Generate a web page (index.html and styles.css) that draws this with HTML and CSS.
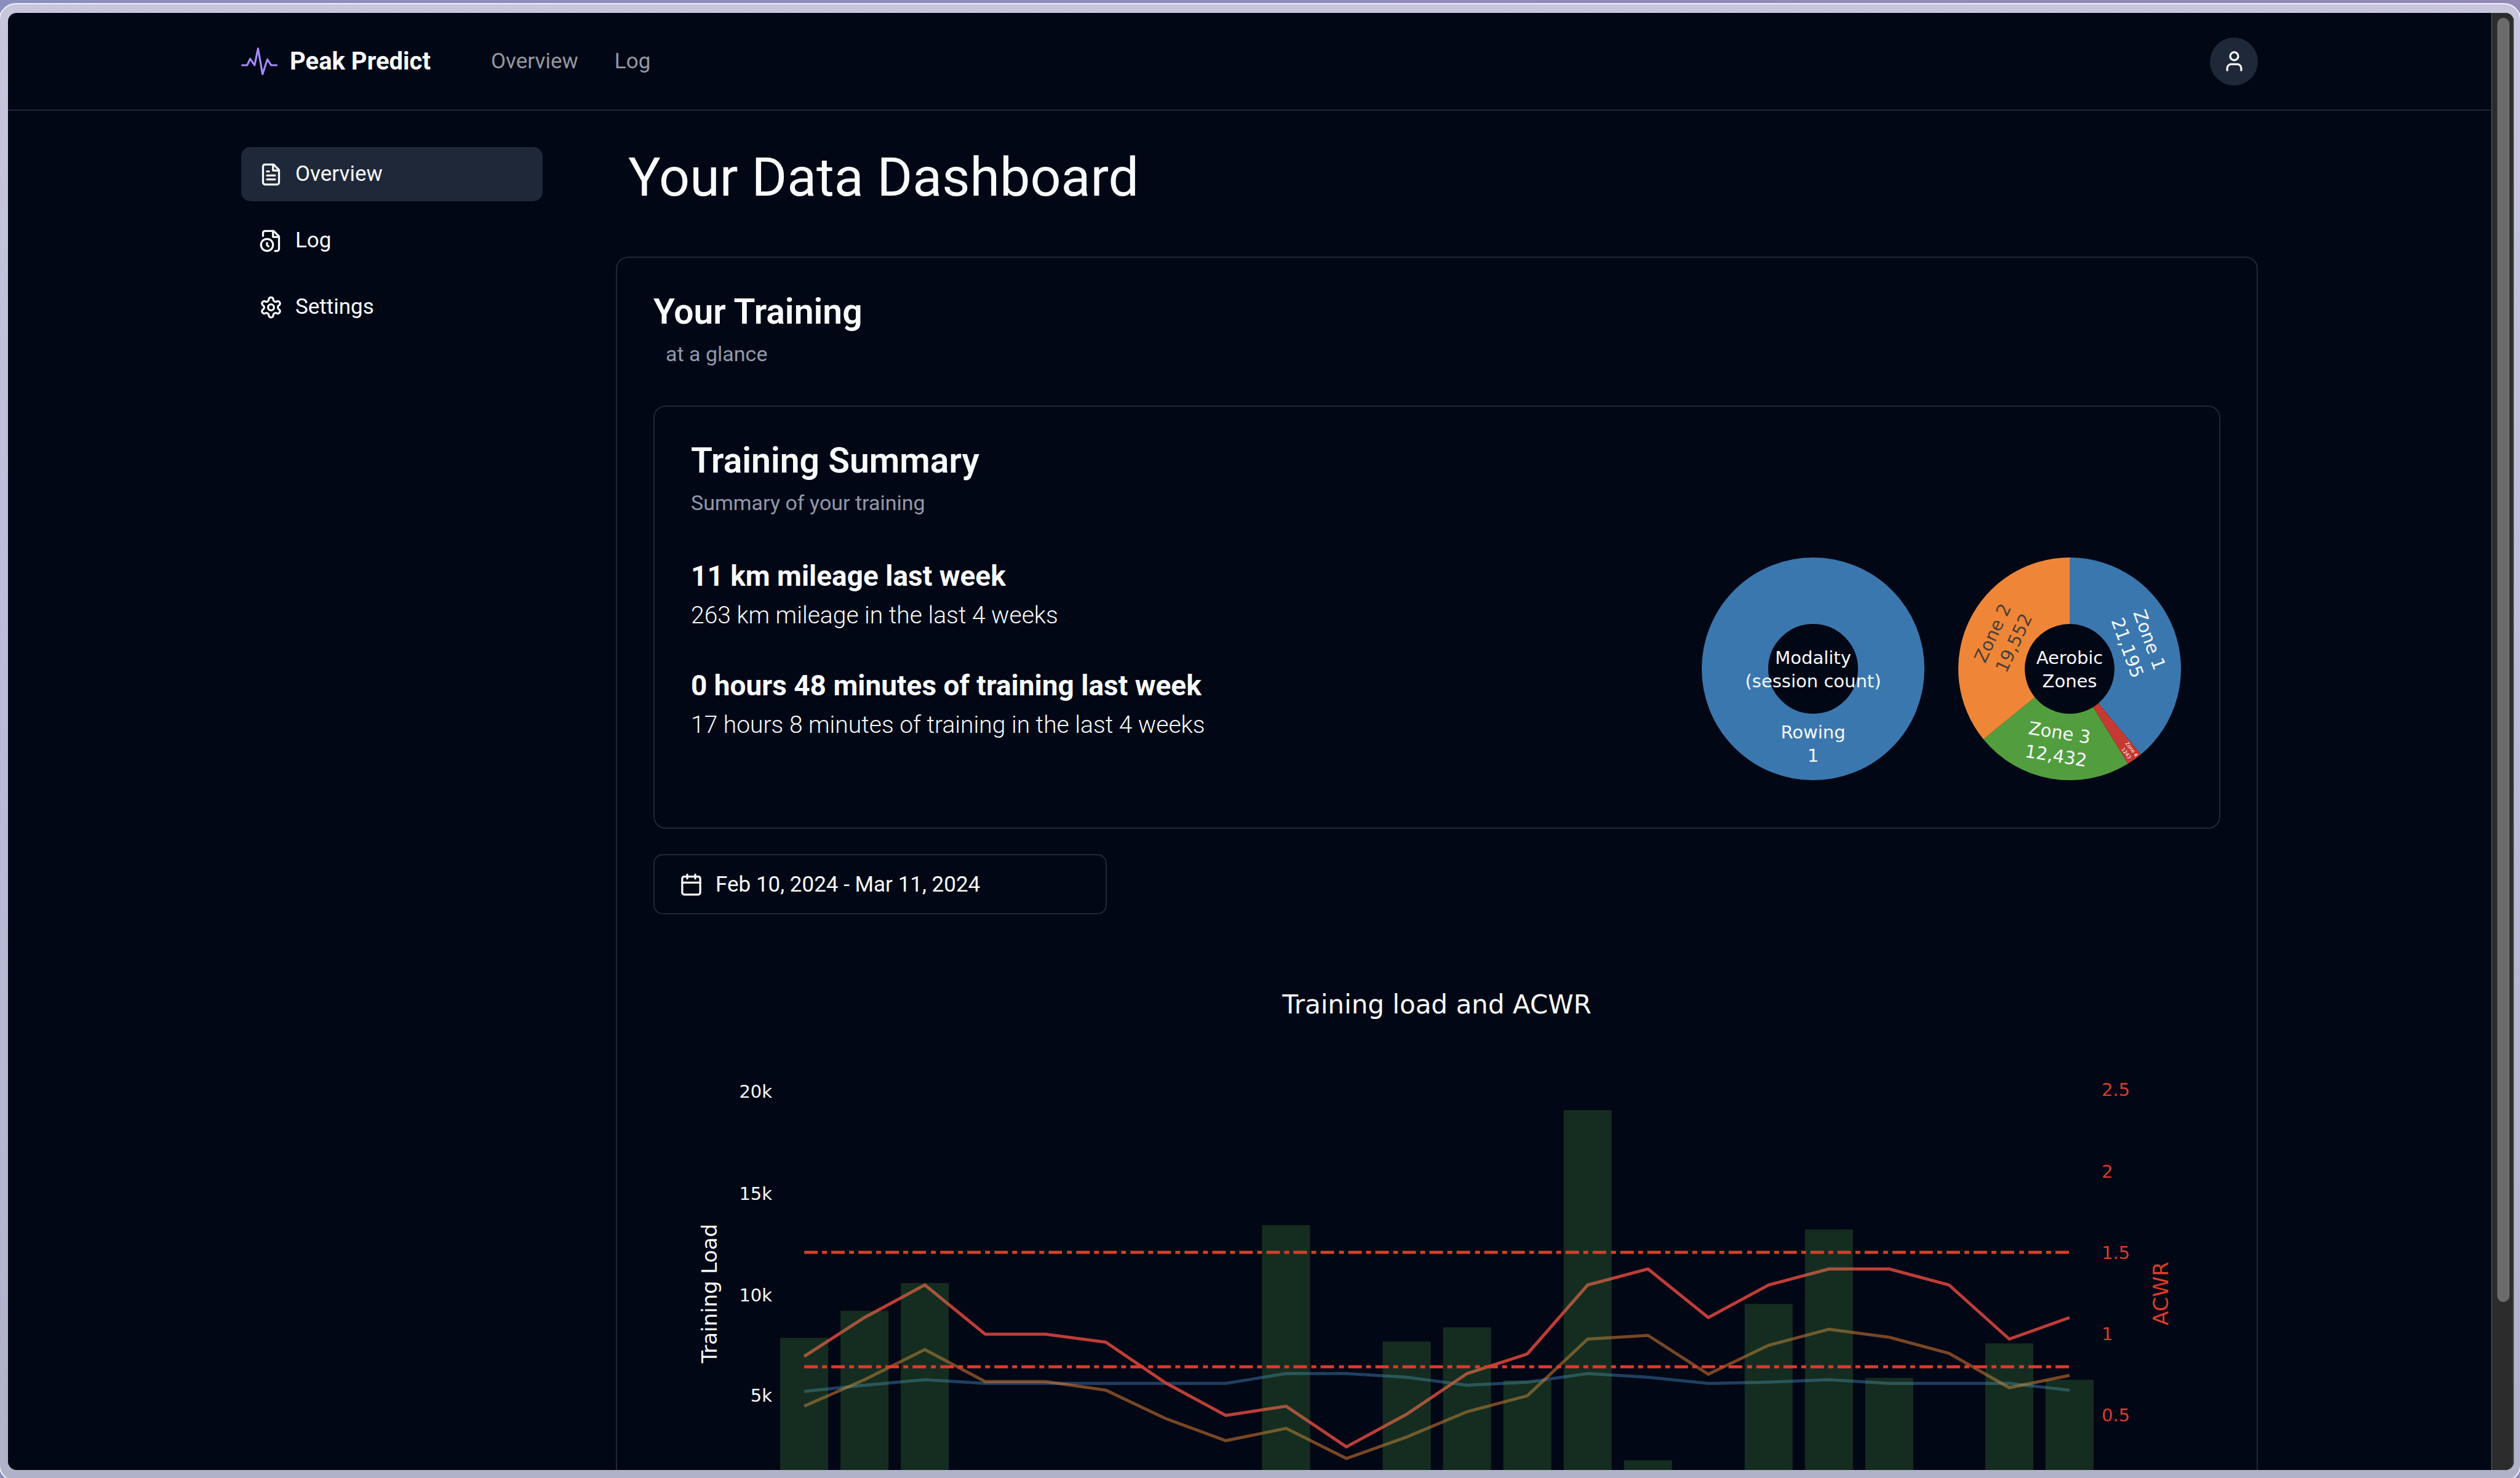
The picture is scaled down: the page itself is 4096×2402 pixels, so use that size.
FILE: index.html
```html
<!DOCTYPE html>
<html lang="en">
<head>
<meta charset="utf-8">
<title>Peak Predict</title>
<link rel="stylesheet" href="styles.css">
</head>
<body>
<div class="frame">
<div class="window">
  <div class="page">
    <header class="site-header">
      <div class="container header-row">
        <a class="brand" href="#">
          <svg class="brand-icon" viewBox="48 43 187 187" aria-hidden="true"><polyline points="53,157 79,157 94,124 117,157 135,71 158,203 183,127 202,157 231,157"/></svg>
          <span>Peak Predict</span>
        </a>
        <nav class="top-nav">
          <a href="#">Overview</a>
          <a href="#">Log</a>
        </nav>
        <button class="avatar" type="button" aria-label="Account">
          <svg class="icon" viewBox="0 0 24 24"><path d="M19 21v-2a4 4 0 0 0-4-4H9a4 4 0 0 0-4 4v2"/><circle cx="12" cy="7" r="4"/></svg>
        </button>
      </div>
    </header>

    <div class="container layout">
      <nav class="sidebar">
        <a class="side-link active" href="#">
          <svg class="icon" viewBox="0 0 24 24"><path d="M14.5 2H6a2 2 0 0 0-2 2v16a2 2 0 0 0 2 2h12a2 2 0 0 0 2-2V7.5L14.5 2z"/><path d="M14 2v6h6M16 13H8M16 17H8M10 9H8"/></svg>
          <span>Overview</span>
        </a>
        <a class="side-link" href="#">
          <svg class="icon" viewBox="0 0 24 24"><path d="M16 22h2a2 2 0 0 0 2-2V7.5L14.5 2H6a2 2 0 0 0-2 2v3"/><path d="M14 2v6h6"/><circle cx="8" cy="16" r="6"/><path d="M9.5 17.5 8 16.25V14"/></svg>
          <span>Log</span>
        </a>
        <a class="side-link" href="#">
          <svg class="icon" viewBox="0 0 24 24"><path d="M12.22 2h-.44a2 2 0 0 0-2 2v.18a2 2 0 0 1-1 1.73l-.43.25a2 2 0 0 1-2 0l-.15-.08a2 2 0 0 0-2.73.73l-.22.38a2 2 0 0 0 .73 2.73l.15.1a2 2 0 0 1 1 1.72v.51a2 2 0 0 1-1 1.74l-.15.09a2 2 0 0 0-.73 2.73l.22.38a2 2 0 0 0 2.73.73l.15-.08a2 2 0 0 1 2 0l.43.25a2 2 0 0 1 1 1.73V20a2 2 0 0 0 2 2h.44a2 2 0 0 0 2-2v-.18a2 2 0 0 1 1-1.73l.43-.25a2 2 0 0 1 2 0l.15.08a2 2 0 0 0 2.73-.73l.22-.39a2 2 0 0 0-.73-2.73l-.15-.08a2 2 0 0 1-1-1.74v-.5a2 2 0 0 1 1-1.74l.15-.09a2 2 0 0 0 .73-2.73l-.22-.38a2 2 0 0 0-2.73-.73l-.15.08a2 2 0 0 1-2 0l-.43-.25a2 2 0 0 1-1-1.73V4a2 2 0 0 0-2-2z"/><circle cx="12" cy="12" r="3"/></svg>
          <span>Settings</span>
        </a>
      </nav>

      <main class="main">
        <h1>Your Data Dashboard</h1>
        <section class="card">
          <div class="card-head">
            <h2>Your Training</h2>
            <p class="inset">at a glance</p>
          </div>

          <section class="card">
            <div class="card-head">
              <h2>Training Summary</h2>
              <p>Summary of your training</p>
            </div>
            <div class="summary">
              <div class="stats">
                <div>
                  <h3>11 km mileage last week</h3>
                  <p>263 km mileage in the last 4 weeks</p>
                </div>
                <div>
                  <h3>0 hours 48 minutes of training last week</h3>
                  <p>17 hours 8 minutes of training in the last 4 weeks</p>
                </div>
              </div>
              <div class="pies">
                <svg class="pie" viewBox="-184 -186 368 385" role="img" aria-label="Modality by session count">
                  <circle class="ring" r="127"/>
                  <text y="-8">Modality</text>
                  <text y="30">(session count)</text>
                  <text y="113">Rowing</text>
                  <text y="151">1</text>
                </svg>
                <svg class="pie" viewBox="-184 -186 368 385" role="img" aria-label="Aerobic zones">
                  <path class="zone1" d="M0-181A181 181 0 0 1 115.9 139L46.7 56A73 73 0 0 0 0-73Z"/>
                  <path class="zone4" d="M115.9 139A181 181 0 0 1 94.8 154.2L38.2 62.2A73 73 0 0 0 46.7 56Z"/>
                  <path class="zone3" d="M94.8 154.2A181 181 0 0 1-140.1 114.6L-56.5 46.2A73 73 0 0 0 38.2 62.2Z"/>
                  <path class="zone2" d="M-140.1 114.6A181 181 0 0 1 0-181V-73A73 73 0 0 0-56.5 46.2Z"/>
                  <text y="-8">Aerobic</text>
                  <text y="30">Zones</text>
                  <g transform="rotate(70)"><text y="-128">Zone 1</text><text y="-90">21,195</text></g>
                  <g transform="rotate(-65)" class="dark"><text y="-128">Zone 2</text><text y="-90">19,552</text></g>
                  <g transform="rotate(9)"><text y="115">Zone 3</text><text y="153">12,432</text></g>
                  <g transform="rotate(54)" class="tiny"><text x="165" y="-2">Zone 4</text><text x="165" y="9">1243</text></g>
                </svg>
              </div>
            </div>
          </section>

          <button class="date-button" type="button">
            <svg class="icon" viewBox="0 0 24 24"><rect x="3" y="4" width="18" height="18" rx="2"/><path d="M16 2v4M8 2v4M3 10h18"/></svg>
            <span>Feb 10, 2024 - Mar 11, 2024</span>
          </button>

          <svg class="chart" viewBox="0 0 2546 948" role="img" aria-label="Training load and ACWR">
            <text class="chart-title" x="1273" y="161">Training load and ACWR</text>
            <g class="ticks-left">
              <text x="193" y="298">20k</text>
              <text x="193" y="464">15k</text>
              <text x="193" y="629">10k</text>
              <text x="193" y="792">5k</text>
            </g>
            <g class="ticks-right">
              <text x="2353" y="295">2.5</text>
              <text x="2353" y="428">2</text>
              <text x="2353" y="560">1.5</text>
              <text x="2353" y="692">1</text>
              <text x="2353" y="824">0.5</text>
            </g>
            <text class="axis-title" transform="translate(103 616) rotate(-90)">Training Load</text>
            <text class="axis-title red" transform="translate(2461 616) rotate(-90)">ACWR</text>

            <polyline class="line blue" points="245,775 343,765 441,756 539,762 637,762 735,762 832,762 930,762 1028,746 1126,746 1224,752 1322,765 1420,760 1518,746 1616,752 1714,762 1812,760 1910,756 2008,762 2105,762 2203,762 2301,773"/>
            <polyline class="line orange" points="245,799 343,756 441,707 539,759 637,759 735,773 832,819 930,855 1028,835 1126,884 1224,849 1322,808 1420,782 1518,690 1616,684 1714,747 1812,700 1910,674 2008,687 2105,713 2203,769 2301,749"/>
            <polyline class="line load" points="245,718 343,655 441,602 539,682 637,682 735,695 832,761 930,814 1028,799 1126,865 1224,812 1322,746 1420,714 1518,602 1616,576 1714,655 1812,602 1910,576 2008,576 2105,602 2203,690 2301,655"/>
            <g class="bars">
              <rect x="206" y="688" width="78" height="260"/>
              <rect x="304" y="644" width="78" height="304"/>
              <rect x="402" y="599" width="78" height="349"/>
              <rect x="989" y="505" width="78" height="443"/>
              <rect x="1185" y="694" width="78" height="254"/>
              <rect x="1283" y="671" width="78" height="277"/>
              <rect x="1381" y="757" width="78" height="191"/>
              <rect x="1479" y="318" width="78" height="630"/>
              <rect x="1577" y="887" width="78" height="61"/>
              <rect x="1773" y="633" width="78" height="315"/>
              <rect x="1871" y="512" width="78" height="436"/>
              <rect x="1969" y="753" width="78" height="195"/>
              <rect x="2164" y="697" width="78" height="251"/>
              <rect x="2262" y="756" width="78" height="192"/>
            </g>
            <path class="limit" d="M245 549H2301"/>
            <path class="limit" d="M245 735H2301"/>
          </svg>
        </section>
      </main>
    </div>
  </div>
  <div class="scrollbar" aria-hidden="true"><div class="thumb"></div></div>
</div>
</div>
</body>
</html>
```

FILE: styles.css
```css
* {
  box-sizing: border-box;
  margin: 0;
}

body {
  height: 100vh;
  overflow: hidden;
  background: linear-gradient(to right, #8b8fbe, #928ab5);
  font-family: Roboto, "Liberation Sans", sans-serif;
  color: #f8fafc;
  display: flex;
  flex-direction: column;
}

a {
  color: inherit;
  text-decoration: none;
}

button {
  font: inherit;
  color: inherit;
}

/* Desktop window chrome */
.frame {
  flex: 1;
  min-height: 0;
  margin: 5px -2px -6px;
  padding: 14px 10px 17px 13px;
  border: 2px solid #eeeef9;
  border-radius: 28px;
  background: linear-gradient(to bottom, #c7c6dc, #bdbdda 40%, #b0b2c9);
}

.window {
  height: 100%;
  display: flex;
  overflow: hidden;
  border-radius: 14px;
  background: #010714;
}

.page {
  flex: 1;
  min-width: 0;
  overflow: hidden;
}

.scrollbar {
  width: 37px;
  padding: 8px 8px 273px;
  background: #2c2c2c;
  border-left: 2px solid #424242;
  border-right: 2px solid #424242;
}

.thumb {
  width: 20px;
  height: 100%;
  border-radius: 10px;
  background: #6b6b6b;
}

.container {
  max-width: 3434px;
  margin: 0 auto;
  padding: 0 78px;
}

.icon {
  width: 39px;
  height: 39px;
  flex: none;
  fill: none;
  stroke: currentColor;
  stroke-width: 2;
  stroke-linecap: round;
  stroke-linejoin: round;
}

/* Header */
.site-header {
  border-bottom: 2px solid #202837;
}

.header-row {
  height: 157px;
  display: flex;
  align-items: center;
}

.brand {
  display: flex;
  align-items: center;
  gap: 20px;
  font-size: 40px;
  line-height: 58px;
  font-weight: 700;
}

.brand-icon {
  width: 59px;
  height: 59px;
  fill: none;
  stroke: #a78bfa;
  stroke-width: 10;
  stroke-linecap: round;
  stroke-linejoin: round;
}

.top-nav {
  display: flex;
  gap: 59px;
  margin-left: 98px;
  font-size: 35px;
  line-height: 40px;
  color: #95979f;
}

.avatar {
  width: 78px;
  height: 78px;
  margin-left: auto;
  padding: 0;
  border: 0;
  border-radius: 50%;
  background: #1f2838;
  display: flex;
  align-items: center;
  justify-content: center;
}

/* Page grid */
.layout {
  display: grid;
  grid-template-columns: 490px minmax(0, 1fr);
  gap: 119px;
  padding-top: 59px;
}

.sidebar {
  display: flex;
  flex-direction: column;
  gap: 20px;
}

.side-link {
  height: 88px;
  padding: 0 29px;
  display: flex;
  align-items: center;
  gap: 20px;
  border-radius: 15px;
  font-size: 35px;
  line-height: 40px;
}

.side-link.active {
  background: #1f2838;
}

h1 {
  margin-bottom: 80px;
  padding-left: 20px;
  font-size: 88px;
  line-height: 98px;
  font-weight: 400;
}

.card {
  padding: 59px;
  border: 2px solid #202837;
  border-radius: 20px;
}

.card-head {
  display: flex;
  flex-direction: column;
  gap: 15px;
  margin-bottom: 59px;
}

h2 {
  font-size: 57px;
  line-height: 58px;
  font-weight: 600;
}

.card-head p {
  font-size: 34px;
  line-height: 49px;
  color: #8f99ab;
}

.card-head .inset {
  padding-left: 20px;
}

.summary {
  display: flex;
  justify-content: space-between;
}

.stats {
  display: flex;
  flex-direction: column;
  gap: 49px;
}

h3 {
  font-size: 46px;
  line-height: 70px;
  font-weight: 700;
}

.stats p {
  font-size: 39px;
  line-height: 59px;
  font-weight: 300;
}

/* Donut charts */
.pies {
  display: flex;
  gap: 49px;
}

.pie {
  display: block;
  width: 368px;
  height: 385px;
  font-family: Verdana, "DejaVu Sans", sans-serif;
  font-size: 29px;
  text-anchor: middle;
  fill: #f8fafc;
}

.ring {
  fill: none;
  stroke: #3b77af;
  stroke-width: 108;
}

.zone1 { fill: #3b77af; }
.zone2 { fill: #ef8637; }
.zone3 { fill: #529e3f; }
.zone4 { fill: #c53a32; }

.dark {
  fill: #4a4038;
}

.tiny {
  font-size: 8px;
}

.date-button {
  width: 737px;
  height: 98px;
  margin-top: 41px;
  padding: 0 40px;
  display: flex;
  align-items: center;
  gap: 20px;
  border: 2px solid #202837;
  border-radius: 15px;
  background: none;
  font-size: 35px;
}

/* Training load chart */
.chart {
  display: block;
  width: 100%;
  font-family: Verdana, "DejaVu Sans", sans-serif;
  font-size: 29px;
  fill: #f8fafc;
}

.chart-title {
  font-size: 42px;
  text-anchor: middle;
}

.ticks-left {
  text-anchor: end;
}

.ticks-right,
.red {
  fill: #dc3a29;
}

.axis-title {
  font-size: 34px;
  text-anchor: middle;
}

.line {
  fill: none;
  stroke-width: 5;
}

.blue {
  stroke: #3b77af;
  stroke-opacity: 0.5;
}

.orange {
  stroke: #ef8637;
  stroke-opacity: 0.5;
}

.load {
  stroke: #c8403a;
  stroke-opacity: 0.95;
}

.bars {
  fill: #54a043;
  fill-opacity: 0.25;
}

.limit {
  fill: none;
  stroke: #dc3a29;
  stroke-width: 5;
  stroke-dasharray: 22 7 8 7 22 7 8 7 22 7 8 7 22 7 8 7 22 8 8 7;
}
```
